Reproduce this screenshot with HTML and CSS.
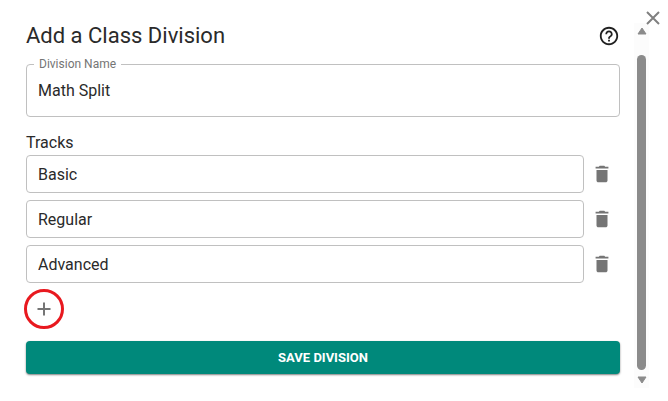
FILE: index.html
```
<!DOCTYPE html>
<html lang="en">
<head>
    <meta charset="UTF-8">
    <meta name="viewport" content="width=device-width, initial-scale=1.0">
    <title>Add a Class Division</title>
    <link rel="stylesheet" href="styles.css">
</head>
<body>
    <svg class="sprite" aria-hidden="true">
        <symbol id="trash" viewBox="0 0 24 24">
            <path d="M6 19c0 1.100.9 2 2 2h8c1.100 0 2-.9 2-2V7.500H6v11.500zM19 4h-3.500l-1-1h-5l-1 1H5v2h14V4z"/>
        </symbol>
    </svg>

    <div class="dialog">
        <button type="button" class="close" aria-label="Close">
            <svg width="14" height="14" viewBox="0 0 14 14"><path d="M1 1l12 12M13 1l-12 12"/></svg>
        </button>

        <form class="division-form">
            <div class="title-row">
                <h1>Add a Class Division</h1>
                <button type="button" class="help" aria-label="Help">
                    <svg width="22" height="22" viewBox="0 0 24 24"><path d="M11 18h2v-2h-2v2zm1-16C6.480 2 2 6.480 2 12s4.480 10 10 10 10-4.480 10-10S17.520 2 12 2zm0 18c-4.410 0-8-3.590-8-8s3.590-8 8-8 8 3.590 8 8-3.590 8-8 8zm0-14c-2.210 0-4 1.790-4 4h2c0-1.100.9-2 2-2s2 .9 2 2c0 2-3 1.750-3 5h2c0-2.250 3-2.500 3-5 0-2.210-1.790-4-4-4z"/></svg>
                </button>
            </div>

            <div class="field">
                <label for="divisionName">Division Name</label>
                <input type="text" id="divisionName" value="Math Split">
            </div>

            <h2 id="tracksLabel">Tracks</h2>
            <div class="tracks">
                <div class="track">
                    <input type="text" aria-labelledby="tracksLabel" value="Basic">
                    <button type="button" class="delete" aria-label="Delete Basic"><svg width="22" height="22"><use href="#trash"/></svg></button>
                </div>
                <div class="track">
                    <input type="text" aria-labelledby="tracksLabel" value="Regular">
                    <button type="button" class="delete" aria-label="Delete Regular"><svg width="22" height="22"><use href="#trash"/></svg></button>
                </div>
                <div class="track">
                    <input type="text" aria-labelledby="tracksLabel" value="Advanced">
                    <button type="button" class="delete" aria-label="Delete Advanced"><svg width="22" height="22"><use href="#trash"/></svg></button>
                </div>
            </div>

            <button type="button" class="add" aria-label="Add track">
                <svg width="14" height="14" viewBox="0 0 14 14"><path d="M7 .5v13M.5 7h13"/></svg>
            </button>

            <button type="submit" class="save">SAVE DIVISION</button>
        </form>

        <div class="scrollbar" aria-hidden="true">
            <svg width="10" height="8" viewBox="0 0 10 8"><path d="M5 1L9 7H1z"/></svg>
            <div class="thumb"></div>
            <svg width="10" height="8" viewBox="0 0 10 8"><path d="M5 7L1 1h8z"/></svg>
        </div>
    </div>
</body>
</html>
```
FILE: styles.css
```
* {
    box-sizing: border-box;
}

body {
    margin: 0;
    background: #fff;
    color: #2a2a2a;
    font-family: Roboto, sans-serif;
    font-size: 16px;
}

button {
    display: flex;
    justify-content: center;
    align-items: center;
    padding: 0;
    border: none;
    background: none;
    cursor: pointer;
}

.sprite {
    display: none;
}

.dialog {
    position: relative;
    display: flex;
    gap: 14px;
    padding: 23px 19px 13px 26px;
}

.close {
    position: absolute;
    top: 11px;
    right: 8px;
}

.close svg {
    stroke: #808080;
    stroke-width: 2;
}

.division-form {
    flex: 1;
    min-width: 0;
    padding-bottom: 14px;
}

.title-row {
    display: flex;
    justify-content: space-between;
    align-items: center;
    height: 25px;
    margin-bottom: 16px;
}

h1 {
    margin: 0;
    font-size: 22px;
    font-weight: 400;
    line-height: 25px;
}

h2 {
    margin: 16px 0 3px;
    font-size: 16px;
    font-weight: 400;
    line-height: 19px;
}

.help svg {
    fill: #212121;
}

input {
    width: 100%;
    height: 38px;
    padding: 0 11px;
    border: 1px solid #c0c0c0;
    border-radius: 4px;
    background: #fff;
    color: #2a2a2a;
    font-family: inherit;
    font-size: 16px;
}

/* outlined field with its label sitting on the border */
.field {
    position: relative;
    display: flex;
}

.field input {
    height: 53px;
}

.field label {
    position: absolute;
    top: -8px;
    left: 8px;
    padding: 0 5px;
    background: #fff;
    color: #757575;
    font-size: 12px;
    line-height: 16px;
}

.tracks {
    display: flex;
    flex-direction: column;
    gap: 7px;
}

.track {
    display: flex;
}

.track input {
    flex: 1;
    min-width: 0;
}

.delete {
    width: 36px;
}

.delete svg {
    fill: #757575;
}

.add {
    position: relative;
    width: 36px;
    height: 36px;
    margin: 8px 0 14px;
}

.add svg {
    stroke: #757575;
    stroke-width: 2;
}

/* red highlight ring */
.add::after {
    content: "";
    position: absolute;
    inset: -2px;
    border: 3px solid #e8191f;
    border-radius: 50%;
}

.save {
    width: 100%;
    height: 33px;
    border-radius: 4px;
    background: #00897b;
    color: #fff;
    font-family: inherit;
    font-size: 13px;
    font-weight: 700;
    line-height: 15px;
    box-shadow: 0 1px 2px rgba(0, 0, 0, 0.5);
}

.scrollbar {
    display: flex;
    flex-direction: column;
    align-items: center;
    width: 15px;
    padding: 4px 0;
    background: #fcfcfc;
}

.scrollbar svg {
    fill: #8b8b8b;
    stroke: #8b8b8b;
    stroke-linejoin: round;
}

.thumb {
    flex: 1;
    width: 9px;
    margin: 20px 0 6px;
    border-radius: 5px;
    background: #8b8b8b;
}
```
